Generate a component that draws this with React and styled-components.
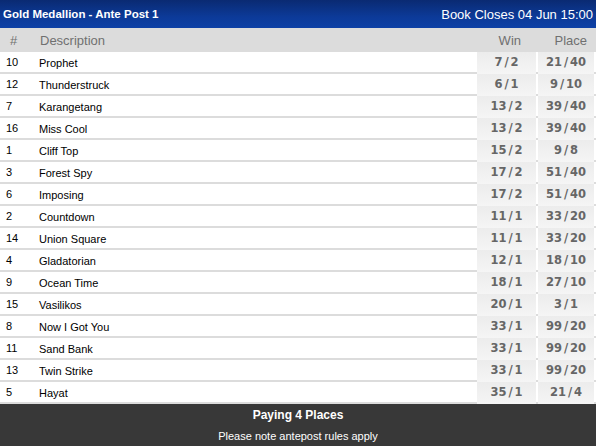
import styled, { createGlobalStyle } from "styled-components";

const runners = [
  ["10", "Prophet", "7/2", "21/40"],
  ["12", "Thunderstruck", "6/1", "9/10"],
  ["7", "Karangetang", "13/2", "39/40"],
  ["16", "Miss Cool", "13/2", "39/40"],
  ["1", "Cliff Top", "15/2", "9/8"],
  ["3", "Forest Spy", "17/2", "51/40"],
  ["6", "Imposing", "17/2", "51/40"],
  ["2", "Countdown", "11/1", "33/20"],
  ["14", "Union Square", "11/1", "33/20"],
  ["4", "Gladatorian", "12/1", "18/10"],
  ["9", "Ocean Time", "18/1", "27/10"],
  ["15", "Vasilikos", "20/1", "3/1"],
  ["8", "Now I Got You", "33/1", "99/20"],
  ["11", "Sand Bank", "33/1", "99/20"],
  ["13", "Twin Strike", "33/1", "99/20"],
  ["5", "Hayat", "35/1", "21/4"],
];

const Price = ({ value, place }) => {
  const [a, b] = value.split("/");
  return (
    <Odds $place={place}>
      {a}
      <Slash>/</Slash>
      {b}
    </Odds>
  );
};

const App = () => {
  return (
    <>
      <GlobalStyle />
      <Market>
        <TitleBar>
          <Title>Gold Medallion - Ante Post 1</Title>
          <Closes>Book Closes 04 Jun 15:00</Closes>
        </TitleBar>
        <HeadRow>
          <HeadCell $pad="10px">#</HeadCell>
          <HeadCell $pad="6px">Description</HeadCell>
          <HeadCell $align="right" $pad="15px">Win</HeadCell>
          <HeadCell $align="right" $pad="9px">Place</HeadCell>
        </HeadRow>
        {runners.map(([num, name, win, place]) => (
          <Row key={num}>
            <Num>{num}</Num>
            <Name>{name}</Name>
            <Price value={win} />
            <Price value={place} place />
          </Row>
        ))}
        <Footer>
          <Paying>Paying 4 Places</Paying>
          <Note>Please note antepost rules apply</Note>
        </Footer>
      </Market>
    </>
  );
};

export default App;

const GlobalStyle = createGlobalStyle`
  body {
    margin: 0;
    background: #ffffff;
    font-family: "Liberation Sans", Arial, sans-serif;
  }
`;

const Market = styled.div`
  width: 596px;
  display: flex;
  flex-direction: column;
`;

const TitleBar = styled.div`
  height: 28px;
  display: flex;
  align-items: center;
  justify-content: space-between;
  padding: 0 3px;
  background: linear-gradient(180deg, #0a2a72 0%, #0c3a98 60%, #0d40a6 100%);
  color: #ffffff;
`;

const Title = styled.div`
  font-size: 11.5px;
  font-weight: 700;
`;

const Closes = styled.div`
  font-size: 13px;
`;

const cols = `
  display: grid;
  grid-template-columns: 34px 1fr 59px 60px;
  column-gap: 0;
`;

const HeadRow = styled.div`
  ${cols}
  height: 24px;
  align-items: center;
  background: #dcdcdc;
  color: #707070;
  font-size: 13px;
`;

const HeadCell = styled.div`
  text-align: ${(p) => p.$align || "left"};
  padding-left: ${(p) => (p.$align ? 0 : p.$pad)};
  padding-right: ${(p) => (p.$align ? p.$pad : 0)};
`;

const Row = styled.div`
  ${cols}
  height: 20px;
  border-bottom: 2px solid #dcdcdc;
  &:last-of-type {
    border-bottom: none;
  }
`;

const Num = styled.div`
  font-size: 11px;
  color: #000000;
  padding-left: 6px;
  line-height: 20px;
`;

const Name = styled.div`
  font-size: 11px;
  color: #000000;
  padding-left: 5px;
  line-height: 22px;
`;

const Odds = styled.div`
  font-family: "DejaVu Sans", Verdana, sans-serif;
  font-size: 11.5px;
  font-weight: 700;
  color: #666666;
  text-align: center;
  line-height: 20px;
  margin: ${(p) => (p.$place ? "0 2px 0 2px" : "0")};
  background: linear-gradient(180deg, #ececec 0%, #f5f5f5 100%);
`;

const Slash = styled.span`
  margin: 0 2px;
`;

const Footer = styled.div`
  background: #383838;
  color: #ffffff;
  text-align: center;
  display: flex;
  flex-direction: column;
  height: 42px;
`;

const Paying = styled.div`
  font-size: 12px;
  font-weight: 700;
  line-height: 22px;
`;

const Note = styled.div`
  font-size: 11px;
  line-height: 20px;
`;
